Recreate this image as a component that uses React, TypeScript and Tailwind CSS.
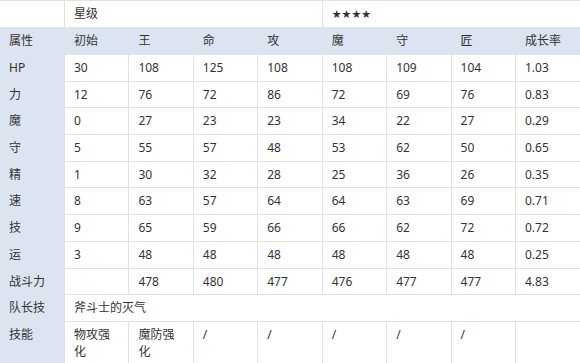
import React from 'react';

const heads = ['属性', '初始', '王', '命', '攻', '魔', '守', '匠', '成长率'];

const rows: string[][] = [
  ['HP', '30', '108', '125', '108', '108', '109', '104', '1.03'],
  ['力', '12', '76', '72', '86', '72', '69', '76', '0.83'],
  ['魔', '0', '27', '23', '23', '34', '22', '27', '0.29'],
  ['守', '5', '55', '57', '48', '53', '62', '50', '0.65'],
  ['精', '1', '30', '32', '28', '25', '36', '26', '0.35'],
  ['速', '8', '63', '57', '64', '64', '63', '69', '0.71'],
  ['技', '9', '65', '59', '66', '66', '62', '72', '0.72'],
  ['运', '3', '48', '48', '48', '48', '48', '48', '0.25'],
  ['战斗力', '', '478', '480', '477', '476', '477', '477', '4.83'],
];

const skills = ['物攻强化', '魔防强化', '/', '/', '/', '/', '/', ''];

const base = 'border-b border-[#e2e2e2] px-[9px] pt-[4px] pb-0 align-top leading-[17px] text-left font-normal';
const cell = base + ' border-r';
const label = cell + ' bg-[#dbe4f0]';
const last = base;

export default function App() {
  return (
    <div className="w-[580px] h-[363px] overflow-hidden bg-white">
      <table
        className="w-[580px] table-fixed border-collapse text-[12px] text-[#333]"
        style={{ fontFamily: '"Noto Sans", "Noto Sans CJK SC", sans-serif' }}
      >
        <tbody>
          <tr className="h-[27px] border-t border-[#e2e2e2]">
            <td className={cell}></td>
            <td className={cell} colSpan={4}>星级</td>
            <td className={last} colSpan={4}>
              <span className="text-[11px]" style={{ fontFamily: '"DejaVu Sans", sans-serif' }}>★★★★</span>
            </td>
          </tr>
          <tr className="h-[27px]">
            {heads.map((h, i) => (
              <th key={h} className={(i === heads.length - 1 ? last : cell) + ' bg-[#dbe4f0]'}>{h}</th>
            ))}
          </tr>
          {rows.map((r) => (
            <tr key={r[0]} className="h-[26.7px]">
              {r.map((v, i) => (
                <td key={i} className={i === 0 ? label : i === r.length - 1 ? last : cell}>{v}</td>
              ))}
            </tr>
          ))}
          <tr className="h-[27px]">
            <td className={label}>队长技</td>
            <td className={last} colSpan={8}>斧斗士的灭气</td>
          </tr>
          <tr className="h-[60px]">
            <td className={label}>技能</td>
            {skills.map((s, i) => (
              <td key={i} className={i === skills.length - 1 ? last : cell}>{s}</td>
            ))}
          </tr>
        </tbody>
      </table>
    </div>
  );
}
